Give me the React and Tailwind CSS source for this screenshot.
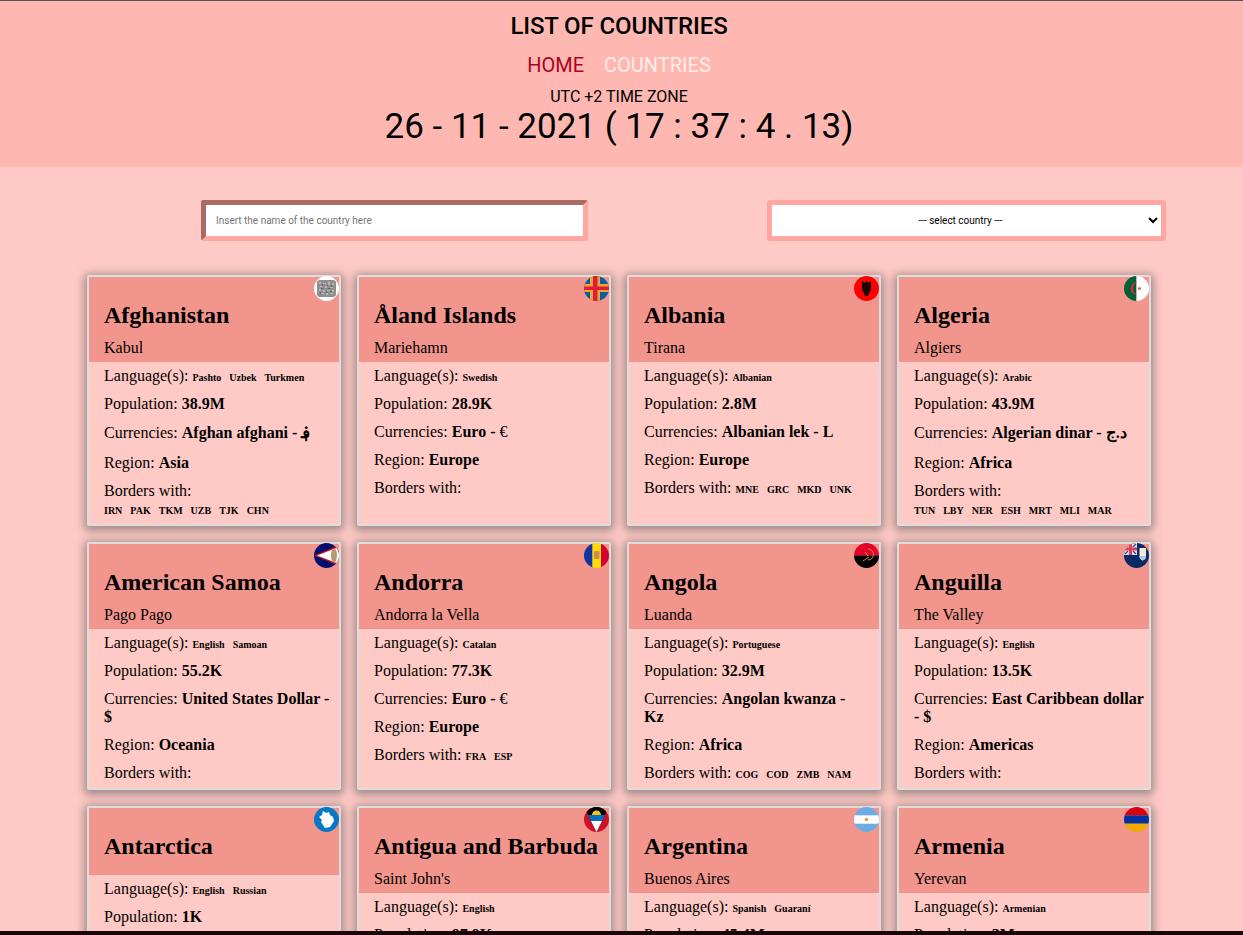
import React from 'react'

// flags are little drawings, all on a 25x25 box and clipped to a circle by the svg itself
const flags = {
  afghanistan: (
    <>
      <rect width="25" height="25" fill="#fff" />
      <rect x="3" y="4" width="19" height="17" rx="3" fill="#8f8f8f" />
      <path d="M5 6h2v2H5zM9 7h3v1H9zM14 6h2v3h-2zM18 7h2v2h-2zM6 10h3v1H6zM11 10h2v2h-2zM16 11h3v1h-3zM5 13h2v2H5zM9 14h2v2H9zM13 14h3v1h-3zM18 14h2v2h-2zM7 17h3v1H7zM12 17h2v2h-2zM16 17h3v1h-3z" fill="#b9b9b9" />
      <path d="M8 8h1v2H8zM13 9h1v1h-1zM17 9h1v2h-1zM7 12h2v1H7zM14 12h2v1h-2zM12 15h1v2h-1zM16 15h2v1h-2zM6 16h1v2H6z" fill="#5f5f5f" />
    </>
  ),
  aland: (
    <>
      <rect width="25" height="25" fill="#0b5ca8" />
      <path d="M6 0h10v25H6zM0 8h25v8H0z" fill="#e8a82a" />
      <path d="M9 0h4.500v25H9zM0 10.500h25V14H0z" fill="#e2183c" />
    </>
  ),
  albania: (
    <>
      <rect width="25" height="25" fill="#f00" />
      <path d="M8 5l2.500 2 2-2 2 2L17 5v9l-2 3-1 3h-3l-1-3-2-3z" fill="#1a0808" />
    </>
  ),
  algeria: (
    <>
      <rect width="12.500" height="25" fill="#006233" />
      <rect x="12.500" width="12.500" height="25" fill="#fff" />
      <path d="M13 6a6.500 6.500 0 1 0 0 13a7.500 7.500 0 0 1 0-13z" fill="#c8304a" />
      <circle cx="15.500" cy="12.500" r="1.500" fill="#e8607a" />
    </>
  ),
  samoa: (
    <>
      <rect width="25" height="25" fill="#000f6f" />
      <path d="M0 12.500L25 2v21z" fill="#bd1021" />
      <path d="M3 12.500L25 4v17z" fill="#fff" />
      <ellipse cx="20" cy="12.500" rx="3" ry="7" fill="#b69a72" />
    </>
  ),
  andorra: (
    <>
      <rect width="8.500" height="25" fill="#10359f" />
      <rect x="8.500" width="8.500" height="25" fill="#fedd00" />
      <rect x="17" width="8" height="25" fill="#d50032" />
      <rect x="10" y="8" width="5.500" height="8" rx="1" fill="#c9904a" />
    </>
  ),
  angola: (
    <>
      <rect width="25" height="12.500" fill="#e8002c" />
      <rect y="12.500" width="25" height="12.500" fill="#000" />
      <path d="M14 6a5.500 5.500 0 0 1 0 11M9 18l6-4M11 9l3 4" stroke="#d9941e" strokeWidth="1" fill="none" />
    </>
  ),
  anguilla: (
    <>
      <rect width="25" height="25" fill="#0a2a66" />
      <rect width="13" height="12" fill="#dfe0ea" />
      <path d="M0 4.500h13v3H0zM5 0h3v12H5z" fill="#e0405a" />
      <path d="M1 1l3 3M12 1L9 4M1 11l3-3M12 11L9 8" stroke="#334a88" strokeWidth="1.200" />
      <path d="M15.500 5h6.500v8q0 3-3.250 4.500-3.250-1.500-3.250-4.500z" fill="#f0ead8" />
      <path d="M15.500 13h6.500q0 3-3.250 4.500-3.250-1.500-3.250-4.500z" fill="#a8cce8" />
    </>
  ),
  antarctica: (
    <>
      <rect width="25" height="25" fill="#0a78c8" />
      <path d="M9 4l3 2 3-1 1 3 3 2 1 4-2 3-2 3-5 1-2-3-2-3 1-2-3-3 3-2z" fill="#fff" />
    </>
  ),
  antigua: (
    <>
      <rect width="25" height="25" fill="#ce1126" />
      <path d="M0 0h25L12.500 25z" fill="#000" />
      <path d="M8 8a4.500 4.500 0 0 1 9 0z" fill="#fcc116" />
      <path d="M4 8h17l-3 6H7z" fill="#0072c6" />
      <path d="M7 14h11l-5.500 11z" fill="#fff" />
    </>
  ),
  argentina: (
    <>
      <rect width="25" height="25" fill="#6cace4" />
      <rect y="8.300" width="25" height="8.400" fill="#fff" />
      <circle cx="12.500" cy="12.500" r="1.800" fill="#e2a050" />
    </>
  ),
  armenia: (
    <>
      <rect width="25" height="8.400" fill="#d90012" />
      <rect y="8.400" width="25" height="8.300" fill="#0033a0" />
      <rect y="16.700" width="25" height="8.300" fill="#f2a800" />
    </>
  ),
}

const countries = [
  { name: 'Afghanistan', capital: 'Kabul', flag: 'afghanistan', languages: ['Pashto', 'Uzbek', 'Turkmen'], population: '38.9M', currency: 'Afghan afghani - ؋', tall: true, region: 'Asia', borders: ['IRN', 'PAK', 'TKM', 'UZB', 'TJK', 'CHN'] },
  { name: 'Åland Islands', capital: 'Mariehamn', flag: 'aland', languages: ['Swedish'], population: '28.9K', currency: 'Euro - ', thinSymbol: '€', region: 'Europe', borders: [] },
  { name: 'Albania', capital: 'Tirana', flag: 'albania', languages: ['Albanian'], population: '2.8M', currency: 'Albanian lek - L', region: 'Europe', borders: ['MNE', 'GRC', 'MKD', 'UNK'] },
  { name: 'Algeria', capital: 'Algiers', flag: 'algeria', languages: ['Arabic'], population: '43.9M', currency: 'Algerian dinar - د.ج', tall: true, region: 'Africa', borders: ['TUN', 'LBY', 'NER', 'ESH', 'MRT', 'MLI', 'MAR'] },
  { name: 'American Samoa', capital: 'Pago Pago', flag: 'samoa', languages: ['English', 'Samoan'], population: '55.2K', currency: 'United States Dollar - $', region: 'Oceania', borders: [] },
  { name: 'Andorra', capital: 'Andorra la Vella', flag: 'andorra', languages: ['Catalan'], population: '77.3K', currency: 'Euro - ', thinSymbol: '€', region: 'Europe', borders: ['FRA', 'ESP'] },
  { name: 'Angola', capital: 'Luanda', flag: 'angola', languages: ['Portuguese'], population: '32.9M', currency: 'Angolan kwanza -\nKz', region: 'Africa', borders: ['COG', 'COD', 'ZMB', 'NAM'] },
  { name: 'Anguilla', capital: 'The Valley', flag: 'anguilla', languages: ['English'], population: '13.5K', currency: 'East Caribbean dollar - $', region: 'Americas', borders: [] },
  { name: 'Antarctica', capital: '', flag: 'antarctica', languages: ['English', 'Russian'], population: '1K', currency: '', region: 'Polar', borders: [] },
  { name: 'Antigua and Barbuda', capital: "Saint John's", flag: 'antigua', languages: ['English'], population: '97.9K', currency: 'East Caribbean dollar - $', region: 'Americas', borders: [] },
  { name: 'Argentina', capital: 'Buenos Aires', flag: 'argentina', languages: ['Spanish', 'Guaraní'], population: '45.4M', currency: 'Argentine peso - $', region: 'Americas', borders: ['BOL', 'BRA', 'CHL', 'PRY', 'URY'] },
  { name: 'Armenia', capital: 'Yerevan', flag: 'armenia', languages: ['Armenian'], population: '3M', currency: 'Armenian dram - ֏', region: 'Asia', borders: ['AZE', 'GEO', 'IRN', 'TUR'] },
]

const Tags = ({ items }) => (
  <span className="inline-block leading-[10px]">
    {items.map((item) => (
      <span key={item} className="mr-2 text-[10px] font-bold">{item}</span>
    ))}
  </span>
)

const CountryCard = ({ country }) => (
  <div className="relative rounded-[2px] border-2 border-[#dddddd] bg-[#ffcac5] shadow-[0_2px_8px_3px_rgba(90,90,90,0.55)]">
    <div className="relative bg-[#f2958d] pt-6 pr-[2px] pb-[5px] pl-[15px]">
      <svg viewBox="0 0 25 25" className="absolute top-[-1px] right-0 h-[25px] w-[25px] rounded-full">
        {flags[country.flag]}
      </svg>
      <h2 className="mb-[10px] text-2xl leading-[28px] font-bold whitespace-nowrap">{country.name}</h2>
      {country.capital && <p className="leading-[18px]">{country.capital}</p>}
    </div>
    <div className="flex flex-col gap-[10px] pt-[5px] pr-[2px] pb-[6px] pl-[15px] leading-[18px]">
      <div>Language(s): <Tags items={country.languages} /></div>
      <div>Population: <b>{country.population}</b></div>
      <div className={country.tall ? 'h-[21px] pt-px' : 'whitespace-pre-line'}>
        Currencies: <b>{country.currency}</b>
        {country.thinSymbol && <span>{country.thinSymbol}</span>}
      </div>
      <div>Region: <b>{country.region}</b></div>
      <div>Borders with: <Tags items={country.borders} /></div>
    </div>
  </div>
)

const App = () => {
  return (
    <div className="flex h-[935px] flex-col overflow-hidden bg-[#ffcac5] font-['Liberation_Serif',serif] text-[16px] text-black">
      <header className="h-[167px] shrink-0 border-t border-[#555555] bg-[#ffb8b1] pr-[5px] text-center font-['Roboto',sans-serif]">
        <h1 className="pt-[11px] text-2xl leading-[28px] font-medium tracking-[-0.12px]">LIST OF COUNTRIES</h1>
        <nav className="mt-[13px] flex justify-center gap-5 text-xl leading-[24px]">
          <a className="text-[#b00020]">HOME</a>
          <a className="text-[#fdeeea]">COUNTRIES</a>
        </nav>
        <p className="mt-[10px] leading-[19px]">UTC +2 TIME ZONE</p>
        <p className="text-[35px] leading-[42px]">26 - 11 - 2021 ( 17 : 37 : 4 . 13)</p>
      </header>

      <main className="min-h-0 flex-1 overflow-hidden">
        <div className="mt-[33px] ml-[201px] flex w-[965px] justify-between font-['Roboto',sans-serif] text-[10px]">
          <input
            placeholder="Insert the name of the country here"
            className="h-[41px] w-[387px] rounded-[3px] border-[5px] border-t-[#a96b66] border-r-[#ffa6a0] border-b-[#ffa6a0] border-l-[#a96b66] bg-white px-[10px] outline-none placeholder:text-[#757575]"
          />
          <select className="h-[41px] w-[399px] appearance-auto rounded-[3px] border-[5px] border-[#ffa6a0] bg-white text-center outline-none">
            <option>--- select country ---</option>
          </select>
        </div>

        <div className="mt-[34px] ml-[87px] grid w-[1064px] grid-cols-4 gap-4">
          {countries.map((country) => (
            <CountryCard key={country.name} country={country} />
          ))}
        </div>
      </main>

      <footer className="h-1 shrink-0 bg-[#1a0508]" />
    </div>
  )
}

export default App
